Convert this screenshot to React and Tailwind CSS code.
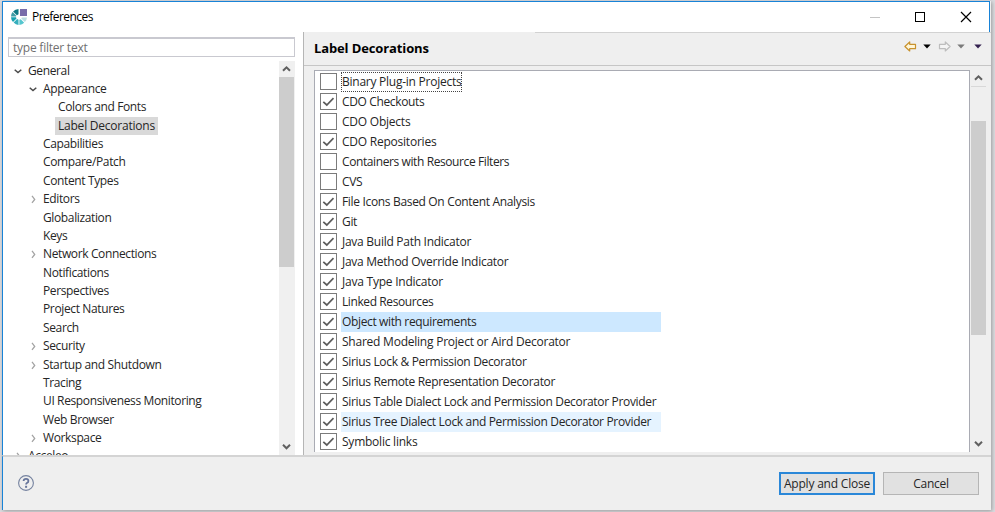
const TREE = [
  { t: 'General', d: 0, s: 'open' },
  { t: 'Appearance', d: 1, s: 'open' },
  { t: 'Colors and Fonts', d: 2 },
  { t: 'Label Decorations', d: 2, sel: true },
  { t: 'Capabilities', d: 1 },
  { t: 'Compare/Patch', d: 1 },
  { t: 'Content Types', d: 1 },
  { t: 'Editors', d: 1, s: 'closed' },
  { t: 'Globalization', d: 1 },
  { t: 'Keys', d: 1 },
  { t: 'Network Connections', d: 1, s: 'closed' },
  { t: 'Notifications', d: 1 },
  { t: 'Perspectives', d: 1 },
  { t: 'Project Natures', d: 1 },
  { t: 'Search', d: 1 },
  { t: 'Security', d: 1, s: 'closed' },
  { t: 'Startup and Shutdown', d: 1, s: 'closed' },
  { t: 'Tracing', d: 1 },
  { t: 'UI Responsiveness Monitoring', d: 1 },
  { t: 'Web Browser', d: 1 },
  { t: 'Workspace', d: 1, s: 'closed' },
  { t: 'Acceleo', d: 0, s: 'closed' },
];

const TIGHT = 'tracking-[-0.36px]';
const NORMAL = 'tracking-[-0.33px]';
const LOOSE = 'tracking-[-0.23px]';

const DECORATIONS = [
  ['Binary Plug-in Projects', false, 'tracking-[-0.25px]'],
  ['CDO Checkouts', true, 'tracking-[-0.36px]'],
  ['CDO Objects', false, LOOSE],
  ['CDO Repositories', true, LOOSE],
  ['Containers with Resource Filters', false, 'tracking-[-0.4px]'],
  ['CVS', false, NORMAL],
  ['File Icons Based On Content Analysis', true, NORMAL],
  ['Git', true, NORMAL],
  ['Java Build Path Indicator', true, 'tracking-[-0.27px]'],
  ['Java Method Override Indicator', true, 'tracking-[-0.27px]'],
  ['Java Type Indicator', true, LOOSE],
  ['Linked Resources', true, 'tracking-[-0.4px]'],
  ['Object with requirements', true, TIGHT],
  ['Shared Modeling Project or Aird Decorator', true, LOOSE],
  ['Sirius Lock & Permission Decorator', true, NORMAL],
  ['Sirius Remote Representation Decorator', true, NORMAL],
  ['Sirius Table Dialect Lock and Permission Decorator Provider', true, NORMAL],
  ['Sirius Tree Dialect Lock and Permission Decorator Provider', true, NORMAL],
  ['Symbolic links', true, LOOSE],
];

const INDENT = ['pl-[9px]', 'pl-[24px]', 'pl-[39px]'];

function TreeArrow({ state }) {
  return (
    <svg width="15" height="12" viewBox="0 0 15 12" fill="none" className="shrink-0">
      {state === 'open' && <path d="M1.7 4.8 L5 7.6 L8.3 4.8" stroke="#4a4a4a" strokeWidth="1.5" />}
      {state === 'closed' && <path d="M4 2.9 L6.7 6.4 L4 9.9" stroke="#a3a3a3" strokeWidth="1.3" />}
    </svg>
  );
}

function ScrollChevron({ up }) {
  return (
    <svg width="16" height="16" viewBox="0 0 16 16" fill="none" className="shrink-0">
      <path d={up ? 'M4 9.8 L7.5 6.3 L11 9.8' : 'M4 5.8 L7.5 9.3 L11 5.8'} stroke="#606060" strokeWidth="2" />
    </svg>
  );
}

function Caret({ color }) {
  return (
    <svg width="8" height="5" viewBox="0 0 8 5">
      <path d="M0.3 0.5 H7.7 L4 4.6 Z" fill={color} />
    </svg>
  );
}

function Arrow({ color, fill, flip }) {
  return (
    <svg width="13" height="11" viewBox="0 0 13 11" className={flip ? '-scale-x-100' : ''}>
      <path d="M0.9 5.5 L5.7 1 V3.3 H11.5 V7.7 H5.7 V10 Z" fill={fill} stroke={color} strokeWidth="1.2" strokeLinejoin="round" />
    </svg>
  );
}

function Logo() {
  return (
    <svg width="16" height="16" viewBox="0 0 16 16" className="shrink-0">
      <path d="M7.5 0.1 V5.2 L5.9 6.2 L2.1 2.4 Q4.2 0.2 7.5 0.1Z" fill="#0f7a85" />
      <path d="M1.6 3 L5.4 6.7 L4.9 7.4 H0 Q0.1 4.8 1.6 3Z" fill="#3f9da6" />
      <path d="M0 8.2 H5 L5.5 9.5 L2 13 Q0.1 10.9 0 8.2Z" fill="#17a2b0" />
      <path d="M2.6 13.6 L6.1 10.1 L7.5 10.8 V16 Q4.7 15.8 2.6 13.6Z" fill="#35aebc" />
      <path d="M8.4 16 V10.8 L9.8 10.2 L13.2 13.7 Q11.2 15.8 8.4 16Z" fill="#55c6cf" />
      <path d="M10.3 9.5 L10.9 8.4 H16 Q15.8 11.1 13.9 13Z" fill="#b9dde1" />
      <rect x="9" y="0" width="7" height="7" fill="#786caa" />
    </svg>
  );
}

function Check({ on }) {
  return (
    <span className="mb-px flex h-[17px] w-[17px] shrink-0 items-center justify-center border border-[#7b7b7b] bg-white">
      {on && (
        <svg width="13" height="13" viewBox="0 0 13 13" fill="none">
          <path d="M1.3 6.8 L4.8 10 L11.5 3.2" stroke="#5c5c5c" strokeWidth="1.7" />
        </svg>
      )}
    </span>
  );
}

function rowTone(i) {
  if (i === 0) return 'outline-1 outline-dotted -outline-offset-1 outline-[#444]';
  if (i === 12) return 'w-80 bg-[#cde8ff]';
  if (i === 17) return 'w-80 bg-[#e5f3ff]';
  return '';
}

export default function App() {
  return (
    <div className="flex h-[512px] w-[995px] overflow-hidden bg-[#dcdce0] pt-px pl-0.5 font-['Open_Sans','Noto_Sans',sans-serif] text-[12px] text-[#262626]">
      <div className="flex h-[509px] w-[989px] flex-col bg-[#efefef] shadow-[1px_1px_4px_#999]">
        <header className="flex h-[31px] w-[988px] shrink-0 items-center border-x border-t border-[#1883d7] bg-white pl-2 text-black">
          <Logo />
          <h1 className="ml-[5px] flex-1 tracking-[-0.55px]">Preferences</h1>
          <svg width="112" height="12" viewBox="0 0 112 12" fill="none" shapeRendering="crispEdges" className="mr-[7px]">
            <path d="M0 6.5 H10" stroke="#c4c4c4" />
            <rect x="45.5" y="1.5" width="9" height="9" stroke="#000" />
            <path d="M91 1 L101 11 M101 1 L91 11" stroke="#000" strokeWidth="1.2" shapeRendering="auto" />
          </svg>
        </header>

        <main className="flex h-[423px] shrink-0 border-l border-[#1883d7]">
          <aside className="flex w-[301px] flex-col border-r border-[#b5b5b5] bg-white pr-2 pl-[5px]">
            <div className="mt-[5px] flex h-5 shrink-0 items-center border border-t-2 border-[#c9c9d0] pl-1 tracking-[-0.23px] text-[#707070]">
              type filter text
            </div>
            <div className="mt-1 flex min-h-0 flex-1">
              <ul className="min-w-0 flex-1 overflow-hidden pt-[0.4px]">
                {TREE.map((n) => (
                  <li key={n.t} className={`-ml-1 flex h-[18.38px] items-center ${INDENT[n.d]}`}>
                    <TreeArrow state={n.s} />
                    <span className={`-ml-[3px] pr-[3px] pl-[3px] leading-[18px] whitespace-nowrap ${n.sel ? 'bg-[#d9d9d9] tracking-[-0.22px]' : 'tracking-[-0.37px]'}`}>
                      {n.t}
                    </span>
                  </li>
                ))}
              </ul>
              <div className="flex w-4 flex-col bg-[#f0f0f0]">
                <ScrollChevron up />
                <div className="h-[190px] w-[15px] bg-[#cdcdcd]" />
                <div className="flex-1" />
                <ScrollChevron />
              </div>
            </div>
          </aside>

          <section className="flex min-w-0 flex-1 flex-col">
            <div className="ml-[231px] h-px shrink-0 bg-[#d2d2d2]" />
            <div className="flex h-[33px] shrink-0 items-center border-b border-[#c6c6c6] pl-2.5">
              <h2 className="flex-1 text-[13px] font-bold tracking-[-0.12px] text-black">Label Decorations</h2>
              <div className="flex items-center pr-[9px] pb-[5px]">
                <Arrow color="#c8922e" fill="#fff6d8" />
                <span className="ml-1.5 flex"><Caret color="#000" /></span>
                <span className="ml-[7px] flex"><Arrow color="#bdbdbd" fill="#f4f4f4" flip /></span>
                <span className="ml-1.5 flex"><Caret color="#7a7a7a" /></span>
                <span className="ml-[9px] flex"><Caret color="#33204f" /></span>
              </div>
            </div>
            <div className="mt-1 flex h-[382px] pl-2.5">
              <ul className="w-[656px] border border-b-0 border-[#a9abb3] bg-white pt-px pl-[5px]">
                {DECORATIONS.map(([label, on, tracking], i) => (
                  <li key={label} className="flex h-5 items-center">
                    <Check on={on} />
                    <span className={`ml-1 pr-px pl-px leading-5 whitespace-nowrap ${tracking} ${rowTone(i)}`}>{label}</span>
                  </li>
                ))}
              </ul>
              <div className="ml-px flex w-4 flex-col">
                <ScrollChevron up />
                <div className="h-[35px] w-[15px] border-t border-[#d8d8d8]" />
                <div className="h-[214px] w-[15px] bg-[#cdcdcd]" />
                <div className="flex-1" />
                <ScrollChevron />
              </div>
            </div>
          </section>
        </main>

        <footer className="flex flex-1 items-center border-t-2 border-l border-t-[#d4d4d4] border-l-[#1883d7] pr-3 pl-[15px]">
          <svg width="16" height="16" viewBox="0 0 16 16" fill="none" className="mb-0.5">
            <circle cx="8" cy="8" r="7.4" stroke="#75829f" strokeWidth="1.1" />
            <path d="M5.6 6 Q5.7 3.8 8 3.8 Q10.4 3.8 10.4 5.9 Q10.4 7.2 8.9 8 Q8.1 8.5 8.1 9.6" stroke="#66749a" strokeWidth="1.8" />
            <rect x="7.1" y="10.8" width="2" height="2" fill="#66749a" />
          </svg>
          <div className="flex-1" />
          <button className="h-[23px] w-24 border-2 border-[#2a87d8] bg-[#e1e1e1] tracking-[-0.2px] whitespace-nowrap">
            Apply and Close
          </button>
          <button className="ml-2 h-[23px] w-24 border border-[#b5b5b5] bg-[#e1e1e1] tracking-[-0.3px]">Cancel</button>
        </footer>
      </div>
    </div>
  );
}
